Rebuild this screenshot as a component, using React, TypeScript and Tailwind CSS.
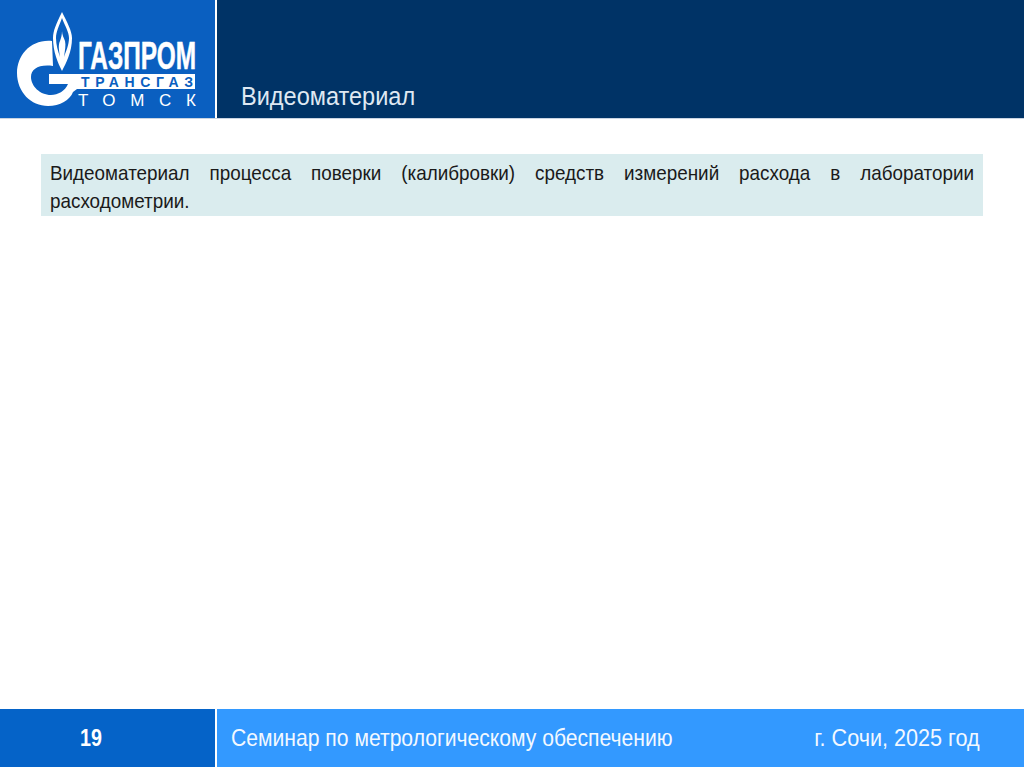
const sans = "font-['Liberation_Sans',Arial,sans-serif]";
const family = "'Liberation Sans',Arial,sans-serif";

function Logo() {
  return (
    <svg width="215" height="118" viewBox="0 0 215 118" className="block">
      <path fill="#fff" fillRule="evenodd" d="M62 12C56 24 53 31 53 38C53 52 58 63 62 71C66 63 72 52 72 38C72 31 67 22 62 12ZM62 18C59 26 56 32 56 38C56 45 58 51 60 57C59 50 58 45 60 41C61 38 62 35 62 31C62 35 64 38 65 41C66 45 65 50 64 57C66 51 69 45 69 38C69 32 65 26 62 18Z" />
      <path fill="#fff" d="M52 41C31 39 17 55 17 73C17 92 31 106 48 106C60 106 70 100 73 92L77 89L77 74L49 74L49 84L68 84C65 91 58 95 51 95C40 95 31 86 31 77C31 69 39 64 53 66Z" />
      <text x="78" y="69" fill="#fff" stroke="#fff" strokeWidth="0.5" fontFamily={family} fontWeight="700" fontSize="38" textLength="118" lengthAdjust="spacingAndGlyphs">ГАЗПРОМ</text>
      <rect x="77" y="74" width="118" height="15" fill="#fff" />
      <text x="81" y="86.5" fill="#0a5fc0" fontFamily={family} fontWeight="700" fontSize="14" textLength="112" lengthAdjust="spacing">ТРАНСГАЗ</text>
      <text x="78" y="106" fill="#fff" fontFamily={family} fontSize="17" textLength="118" lengthAdjust="spacing">ТОМСК</text>
    </svg>
  );
}

export default function App() {
  return (
    <div className={`flex h-[767px] w-[1024px] flex-col overflow-hidden bg-white ${sans}`}>
      <header className="flex h-[119px] shrink-0 border-b border-[#c9d4e2]">
        <div className="w-[215px] shrink-0 bg-[#0a5fc0]">
          <Logo />
        </div>
        <div className="ml-[2px] flex flex-1 items-end bg-[#003366] pb-[6px] pl-[24px]">
          <h1 className="w-[174px] whitespace-nowrap">
            <span className="inline-block origin-left scale-x-[0.905] text-[26px] leading-[30px] text-[#dfe8f2]">Видеоматериал</span>
          </h1>
        </div>
      </header>
      <main className="flex-1 overflow-hidden px-[41px] pt-[35px]">
        <div className="h-[62px] w-[942px] bg-[#daecee] px-[9px] pt-[5px]">
          <p className="w-[924px]">
            <span className="block w-[1029px] origin-left scale-x-[0.898] text-justify text-[21px] leading-[28px] text-[#1a1a1a]">
              Видеоматериал процесса поверки (калибровки) средств измерений расхода в лаборатории расходометрии.
            </span>
          </p>
        </div>
      </main>
      <footer className="flex h-[58px] shrink-0">
        <div className="flex w-[215px] shrink-0 items-center bg-[#0563c8] pl-[80px] text-[24px] font-bold text-white">
          <span className="inline-block origin-left scale-x-[0.82]">19</span>
        </div>
        <div className="ml-[2px] flex flex-1 items-center justify-between bg-[#3399ff] pl-[14px] pr-[44px] text-[24px] text-[#f2f8ff]">
          <span className="w-[442px] shrink-0 whitespace-nowrap">
            <span className="inline-block origin-left scale-x-[0.88]">Семинар по метрологическому обеспечению</span>
          </span>
          <span className="flex w-[165px] shrink-0 justify-end whitespace-nowrap">
            <span className="inline-block shrink-0 origin-right scale-x-[0.9]">г. Сочи, 2025 год</span>
          </span>
        </div>
      </footer>
    </div>
  );
}
